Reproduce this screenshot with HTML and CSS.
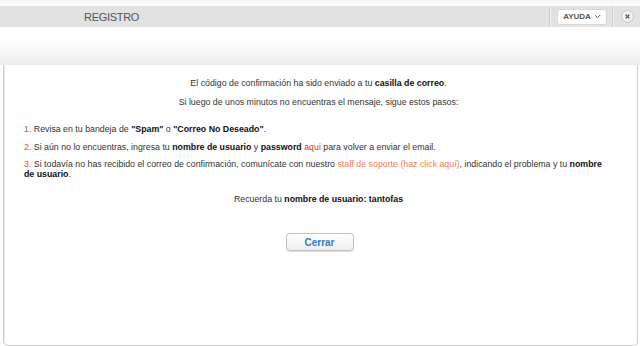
FILE: index.html
```html
<!DOCTYPE html>
<html lang="es">
<head>
<meta charset="utf-8">
<link rel="stylesheet" href="styles.css">
</head>
<body>
<div class="top-edge"></div>
<div class="header">
  <div class="title">REGISTRO</div>
  <div class="tools">
    <span class="sep"></span>
    <button class="help">AYUDA <svg width="7" height="5" viewBox="0 0 7 5"><path d="M0.8 1 L3.5 3.7 L6.2 1" fill="none" stroke="#555" stroke-width="1"/></svg></button>
    <span class="sep"></span>
    <span class="close"><svg width="13" height="13" viewBox="0 0 13 13"><circle cx="6.5" cy="6.5" r="6" fill="#f2f2f2" stroke="#c4c4c4"/><path d="M4.6 4.6 L8.4 8.4 M8.4 4.6 L4.6 8.4" stroke="#555" stroke-width="1.3"/></svg></span>
  </div>
</div>
<div class="fade"></div>
<div class="panel">
  <p class="center">El código de confirmación ha sido enviado a tu <b>casilla de correo</b>.</p>
  <p class="center">Si luego de unos minutos no encuentras el mensaje, sigue estos pasos:</p>
  <ol class="steps">
    <li><span class="num">1.</span> Revisa en tu bandeja de <b>"Spam"</b> o <b>"Correo No Deseado"</b>.</li>
    <li><span class="num">2.</span> Si aún no lo encuentras, ingresa tu <b>nombre de usuario</b> y <b>password</b> <a class="red">aqui</a> para volver a enviar el email.</li>
    <li><span class="num">3.</span> Si todavía no has recibido el correo de confirmación, comunícate con nuestro <a class="salmon">staff de soporte (haz click aquí)</a>, indicando el problema y tu <b>nombre</b> <b>de usuario</b>.</li>
  </ol>
  <p class="center remember">Recuerda tu <b>nombre de usuario: tantofas</b></p>
  <div class="actions"><button class="close-btn">Cerrar</button></div>
</div>
</body>
</html>
```
FILE: styles.css
```css
* { box-sizing: border-box; }
html, body { margin: 0; padding: 0; }
body {
  width: 640px;
  height: 346px;
  overflow: hidden;
  background: #fff;
  font-family: "Liberation Sans", Arial, sans-serif;
  font-size: 8.8px;
  color: #333;
}
.top-edge {
  height: 5px;
  background: linear-gradient(#f4f4f4, #fff);
}
.header {
  height: 22px;
  background: #e2e2e2;
  border-top: 1px solid #fafafa;
  display: flex;
  align-items: center;
  justify-content: space-between;
}
.title {
  padding-left: 84px;
  font-size: 11px;
  color: #555;
  letter-spacing: -0.3px;
}
.tools {
  display: flex;
  align-items: center;
  height: 100%;
}
.sep {
  width: 2px;
  height: 100%;
  background: #d0d0d0;
  border-right: 1px solid #ececec;
}
.help {
  margin: 0 5px 0 6px;
  width: 50px;
  height: 16px;
  border: 1px solid #d6d6d6;
  border-radius: 3px;
  background: #fff;
  font-family: "Liberation Sans", Arial, sans-serif;
  font-size: 8px;
  font-weight: bold;
  color: #555;
  padding: 0;
  display: flex;
  align-items: center;
  justify-content: center;
  gap: 3px;
}
.close {
  width: 26px;
  display: flex;
  justify-content: center;
  align-items: center;
}
.close svg { display: block; }
.fade {
  height: 38px;
  background: linear-gradient(#fff 0%, #fff 35%, #ececec 100%);
}
.panel {
  margin: 0 2px 0 3px;
  height: 281px;
  background: #fff;
  border: 1px solid #cfcfcf;
  border-top: none;
  border-radius: 0 0 5px 5px;
  box-shadow: inset 1px 0 0 #e8e8e8;
  padding: 9px 24px 0 20px;
}
p { margin: 0; }
.center { text-align: center; line-height: 19px; }
.steps {
  list-style: none;
  margin: 12px 0 0;
  padding: 0;
}
.steps li {
  line-height: 10px;
  margin-bottom: 7.5px;
}
.num { color: #e8501e; }
.red { color: #e0301e; }
.salmon { color: #f27a58; }
b { color: #111; }
.remember { margin-top: 11px; }
.actions {
  display: flex;
  justify-content: center;
  margin-top: 24px;
}
.close-btn {
  width: 68px;
  height: 18px;
  border: 1px solid #c2c2c2;
  border-radius: 4px;
  background: linear-gradient(#ffffff, #eeeeee);
  box-shadow: 0 1px 1px rgba(0,0,0,0.15);
  font-family: "Liberation Sans", Arial, sans-serif;
  font-size: 10px;
  font-weight: bold;
  color: #2f7fbf;
  padding: 0;
  margin-left: 2px;
}
```
